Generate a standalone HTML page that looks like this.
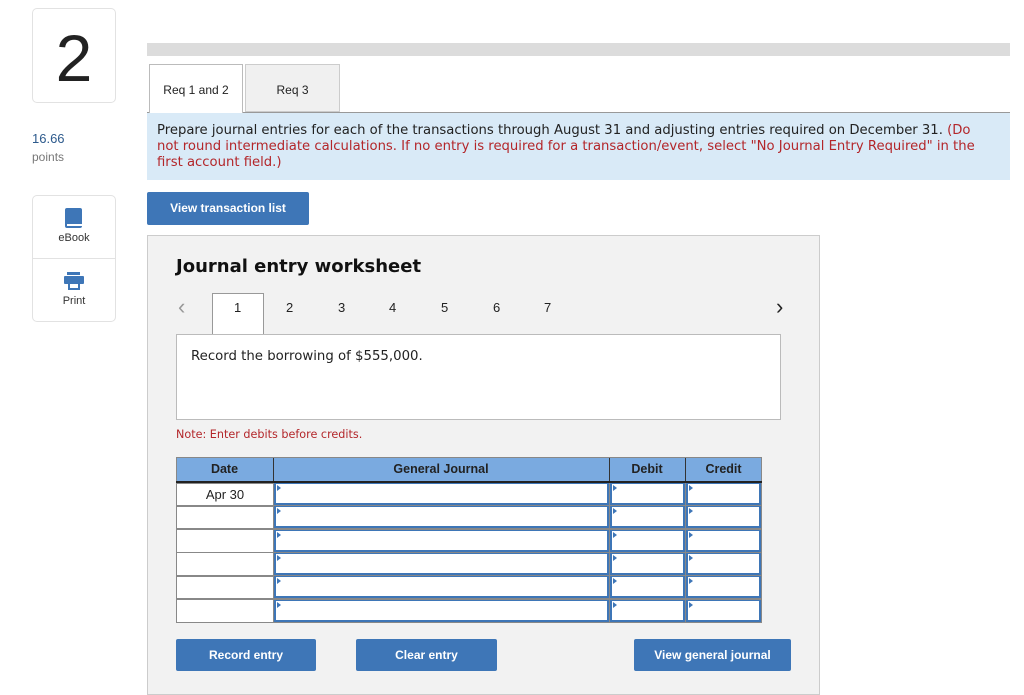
<!DOCTYPE html>
<html><head><style>
*{box-sizing:border-box;margin:0;padding:0}
body{width:1024px;height:687px;background:#fff;font-family:"Liberation Sans",Verdana,sans-serif;position:relative;overflow:hidden}
.a{position:absolute}
.card{border:1px solid #e2e2e2;border-radius:5px;background:#fff}
.btn{background:#3e76b7;color:#fff;font-weight:bold;font-size:12px;text-align:center;border-radius:2px}
.cell{position:absolute;background:#fff}
.tri{position:absolute;left:1px;top:1px;width:0;height:0;border-left:4px solid #3e76b7;border-top:3px solid transparent;border-bottom:3px solid transparent}
</style></head><body>
<div class="a card" style="left:32px;top:8px;width:84px;height:95px"></div>
<div class="a" style="left:32px;top:18px;width:84px;text-align:center;font-size:66px;color:#222;line-height:80px">2</div>
<div class="a" style="left:32px;top:131px;font-size:13px;color:#2d5a8c">16.66</div>
<div class="a" style="left:32px;top:150px;font-size:12px;color:#777">points</div>
<div class="a card" style="left:32px;top:195px;width:84px;height:127px"></div>
<div class="a" style="left:33px;top:258px;width:82px;border-top:1px solid #e2e2e2"></div>
<div class="a" style="left:65px;top:208px;width:17px;height:20px;background:#3e76b7;border-radius:2px"></div>
<div class="a" style="left:67px;top:224px;width:15px;height:2px;background:#fff"></div>
<div class="a" style="left:32px;top:232px;width:84px;text-align:center;font-size:11px;color:#333">eBook</div>
<div class="a" style="left:67px;top:272px;width:13px;height:3px;background:#3e76b7"></div>
<div class="a" style="left:64px;top:276px;width:20px;height:8px;background:#3e76b7;border-radius:1px"></div>
<div class="a" style="left:68px;top:282px;width:12px;height:8px;background:#fff;border:2px solid #3e76b7"></div>
<div class="a" style="left:32px;top:295px;width:84px;text-align:center;font-size:11px;color:#333">Print</div>

<div class="a" style="left:147px;top:43px;width:863px;height:13px;background:#dcdcdc"></div>
<div class="a" style="left:147px;top:112px;width:863px;border-top:1px solid #999"></div>
<div class="a" style="left:149px;top:64px;width:94px;height:50px;background:#fff;border:1px solid #bbb;border-bottom:none;font-size:12px;text-align:center;padding-top:18px;color:#222">Req 1 and 2</div>
<div class="a" style="left:245px;top:64px;width:95px;height:48px;background:#f0f0f0;border:1px solid #ccc;font-size:12px;text-align:center;padding-top:18px;color:#222">Req 3</div>
<div class="a" style="left:147px;top:113px;width:863px;height:67px;background:#d9eaf7;font-family:'DejaVu Sans',sans-serif;font-size:13.2px;line-height:16px;padding:10px 24px 0 10px;color:#222">Prepare journal entries for each of the transactions through August 31 and adjusting entries required on December 31. <span style="color:#b3262a">(Do not round intermediate calculations. If no entry is required for a transaction/event, select "No Journal Entry Required" in the first account field.)</span></div>
<div class="a btn" style="left:147px;top:192px;width:162px;height:33px;line-height:33px">View transaction list</div>

<div class="a" style="left:147px;top:235px;width:673px;height:460px;background:#f2f2f2;border:1px solid #ccc"></div>
<div class="a" style="left:176px;top:256px;font-family:'DejaVu Sans',sans-serif;font-weight:bold;font-size:18px;color:#111">Journal entry worksheet</div>
<div class="a" style="left:178px;top:294px;font-size:22px;color:#999">&lsaquo;</div>
<div class="a" style="left:776px;top:294px;font-size:22px;color:#222">&rsaquo;</div>
<div class="a" style="left:212px;top:293px;width:52px;height:42px;background:#fff;border:1px solid #999;border-bottom:none"></div>
<div class="a" style="left:176px;top:300px;width:400px;font-size:13px;color:#222">
<span class="a" style="left:58px">1</span><span class="a" style="left:110px">2</span><span class="a" style="left:162px">3</span><span class="a" style="left:213px">4</span><span class="a" style="left:265px">5</span><span class="a" style="left:317px">6</span><span class="a" style="left:368px">7</span></div>
<div class="a" style="left:176px;top:334px;width:605px;height:86px;background:#fff;border:1px solid #bbb;font-family:'DejaVu Sans',sans-serif;font-size:13.3px;padding:14px 0 0 14px;color:#222">Record the borrowing of $555,000.</div>
<div class="a" style="left:176px;top:428px;font-family:'DejaVu Sans',sans-serif;font-size:11.2px;color:#b3262a">Note: Enter debits before credits.</div>

<div class="a" style="left:176px;top:457px;width:586px;height:166px;background:#888"></div>
<div class="a" style="left:177px;top:458px;width:584px;height:24px;background:#7aaae0"></div>
<div class="a" style="left:273px;top:458px;width:1px;height:24px;background:#333"></div>
<div class="a" style="left:609px;top:458px;width:1px;height:24px;background:#333"></div>
<div class="a" style="left:685px;top:458px;width:1px;height:24px;background:#333"></div>
<div class="a" style="top:462px;left:176px;width:586px;font-weight:bold;font-size:12.5px;color:#222">
<span class="a" style="left:0;width:97px;text-align:center">Date</span><span class="a" style="left:97px;width:336px;text-align:center">General Journal</span><span class="a" style="left:433px;width:76px;text-align:center">Debit</span><span class="a" style="left:509px;width:77px;text-align:center">Credit</span></div>
<div class="a" style="left:176px;top:481px;width:586px;height:2px;background:#222"></div>
<div id="rows"></div>
<script>
var h='';for(var i=0;i<6;i++){var y=483+i*23.3;
h+='<div class="cell" style="left:177px;top:'+(y+0.5)+'px;width:96px;height:21.5px;font-size:13px;text-align:center;padding-top:3px;color:#222">'+(i==0?'Apr 30':'')+'</div>';
[[274,335],[610,75],[686,75]].forEach(function(c){h+='<div class="cell" style="left:'+c[0]+'px;top:'+y+'px;width:'+c[1]+'px;height:22px;border:2px solid #3e76b7;border-top:1px solid #3e76b7"><div class="tri"></div></div>';});}
document.getElementById('rows').innerHTML=h;
</script>

<div class="a btn" style="left:176px;top:639px;width:140px;height:32px;line-height:32px">Record entry</div>
<div class="a btn" style="left:356px;top:639px;width:141px;height:32px;line-height:32px">Clear entry</div>
<div class="a btn" style="left:634px;top:639px;width:157px;height:32px;line-height:32px">View general journal</div>
</body></html>
